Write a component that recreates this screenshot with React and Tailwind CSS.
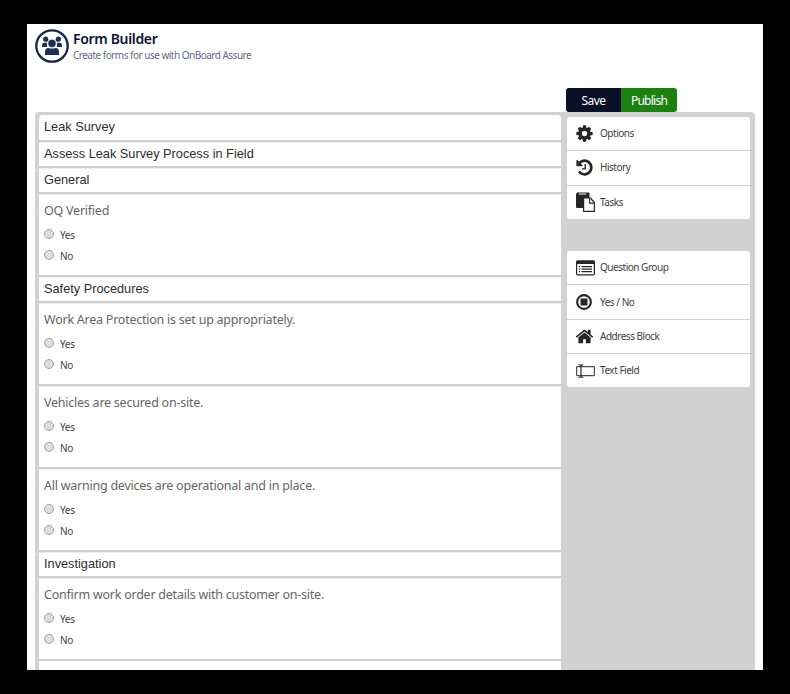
import React from "react";

const INK = "#262626";

const Fa = ({ d }) => (
  <svg viewBox="0 0 1792 1792" className="size-[19px] -ml-px shrink-0" fill={INK}>
    <path d={d} />
  </svg>
);

const COG =
  "M1152 896q0-106-75-181t-181-75-181 75-75 181 75 181 181 75 181-75 75-181zm512-109v222q0 12-8 23t-20 13l-185 28q-19 54-39 91 35 50 107 138 10 12 10 25t-9 23q-27 37-99 108t-94 71q-12 0-26-9l-138-108q-44 23-91 38-16 136-29 186-7 28-36 28h-222q-14 0-24.5-8.5t-11.5-21.5l-28-184q-49-16-90-37l-141 107q-10 9-25 9-14 0-25-11-126-114-165-168-7-10-7-23 0-12 8-23 15-21 51-66.5t54-70.5q-27-50-41-99l-183-27q-13-2-21-12.5t-8-23.5v-222q0-12 8-23t19-13l186-28q14-46 39-92-40-57-107-138-10-12-10-24 0-10 9-23 26-36 98.5-107.5t94.5-71.5q13 0 26 10l138 107q44-23 91-38 16-136 29-186 7-28 36-28h222q14 0 24.5 8.5t11.5 21.5l28 184q49 16 90 37l142-107q9-9 24-9 13 0 25 10 129 119 165 170 7 8 7 22 0 12-8 23-15 21-51 66.5t-54 70.5q26 50 41 98l183 28q13 2 21 12.5t8 23.5z";
const HISTORY =
  "M1664 896q0 156-61 298t-164 245-245 164-298 61q-172 0-327-72.5t-264-204.5q-7-10-6.5-22.5t8.5-20.5l137-138q10-9 25-9 16 2 23 12 73 95 179 147t225 52q104 0 198.5-40.5t163.5-109.5 109.5-163.5 40.5-198.5-40.5-198.5-109.5-163.5-163.5-109.5-198.5-40.5q-98 0-188 35.5t-160 101.5l137 138q31 30 14 69-17 40-59 40h-448q-26 0-45-19t-19-45v-448q0-42 40-59 39-17 69 14l130 129q107-101 244.5-156.5t284.5-55.5q156 0 298 61t245 164 164 245 61 298zm-640-288v448q0 14-9 23t-23 9h-320q-14 0-23-9t-9-23v-64q0-14 9-23t23-9h224v-352q0-14 9-23t23-9h64q14 0 23 9t9 23z";
const HOME =
  "M1472 992v480q0 26-19 45t-45 19h-384v-384h-256v384h-384q-26 0-45-19t-19-45v-480q0-1 .5-3t.5-3l575-474 575 474q1 2 1 6zm223-69l-62 74q-8 9-21 11h-3q-13 0-21-7l-692-577-692 577q-12 8-24 7-13-2-21-11l-62-74q-8-10-7-23.5t11-21.5l719-599q32-26 76-26t76 26l244 204v-195q0-14 9-23t23-9h192q14 0 23 9t9 23v408l219 182q10 8 11 21.5t-7 23.5z";

const Paste = () => (
  <svg viewBox="0 0 19 20" className="h-5 w-[19px] shrink-0">
    <path d="M1 .6h11.5q1 0 1 1V6H1zM0 1.6h12V16H1q-1 0-1-1z" fill={INK} />
    <path d="M3 1.6h7.2v1H3z" fill="#fff" />
    <path d="M7.6 6h6.8l4 4.6v8.8H7.6z" fill="#fff" stroke={INK} strokeWidth="1.2" strokeLinejoin="round" />
    <path d="M13.6 6v5.1h4.8" fill="none" stroke={INK} strokeWidth="1.1" />
  </svg>
);

const ListAlt = () => (
  <svg viewBox="0 0 19 16" className="h-4 w-[19px] shrink-0" fill={INK}>
    <rect x=".6" y="1.1" width="17.8" height="13.8" rx="1.2" fill="#fff" stroke={INK} strokeWidth="1.2" />
    <path d="M.2 1.7Q.2.5 1.4.5h16.2q1.2 0 1.2 1.2V4H.2z" />
    <path d="M3 6h1.2v1.2H3zM3 8.5h1.2v1.2H3zM3 11h1.2v1.2H3zM5.5 6H16v1.2H5.5zM5.5 8.5H16v1.2H5.5zM5.5 11H16v1.2H5.5z" />
  </svg>
);

const StopCircle = () => (
  <svg viewBox="0 0 16 16" className="size-4 shrink-0">
    <circle cx="8" cy="8" r="6.9" fill="#fff" stroke={INK} strokeWidth="2.1" />
    <rect x="4.5" y="4.5" width="7" height="7" rx=".4" fill={INK} />
  </svg>
);

const TextField = () => (
  <svg viewBox="0 0 19 14" className="h-3.5 w-[19px] shrink-0" fill="none" stroke="#4c4c4c" strokeWidth="1.2">
    <rect x=".6" y="2.6" width="17.8" height="9" rx=".5" />
    <path d="M2.5 .8Q5 .5 5 2.2V12Q5 13.4 2.5 13.3M7.2 .8Q5 .5 5 2.2M5 12Q5 13.4 7.2 13.3" stroke="#262626" />
  </svg>
);

const Logo = () => (
  <svg viewBox="0 0 34 34" className="size-[34px] shrink-0" fill="#1d2f52">
    <circle cx="17" cy="17" r="15.7" fill="#fff" stroke="#14264a" strokeWidth="2.3" />
    <circle cx="10.7" cy="10.2" r="2.6" />
    <circle cx="23.3" cy="10.2" r="2.6" />
    <path d="M7 18v-2q0-2.3 2.5-2.3h2.6v4.3zM27 18v-2q0-2.3-2.5-2.3h-2.6v4.3z" />
    <circle cx="17" cy="14.4" r="4.1" stroke="#fff" strokeWidth=".7" />
    <path d="M10 26v-3.2q0-3.9 3.4-3.9 3.6 1.2 7.2 0 3.4 0 3.4 3.9V26z" />
  </svg>
);

const Heading = ({ h = "h-[26px]", first, children }) => (
  <div
    className={`${h} ${first ? "rounded-t-[4px] pt-px" : "border-t border-t-[#eeeeee]"} shrink-0 border-b-2 border-b-[#cecece] bg-white pl-[5px] font-['Liberation_Sans',sans-serif] text-[12.75px] leading-[21px] text-[#2d2d2d]`}
  >
    {children}
  </div>
);

const Radio = ({ label }) => (
  <label className="flex h-[21px] items-start">
    <span className="size-[10px] rounded-full border border-[#a3a3a3] bg-[#dedede]" />
    <span className="ml-1.5 mt-[-3px] text-[10px] leading-[18px] tracking-[-0.3px] text-[#3f3f3f]">{label}</span>
  </label>
);

const Question = ({ h = "h-[83px]", children }) => (
  <div className={`${h} shrink-0 border-b-2 border-t border-b-[#cecece] border-t-[#eeeeee] bg-white pl-[5px]`}>
    <div className="mt-[6px] h-[28px] whitespace-nowrap text-[12.5px] leading-[20px] tracking-[-0.24px] text-[#666]">{children}</div>
    <Radio label="Yes" />
    <Radio label="No" />
  </div>
);

const Tool = ({ icon, last, children }) => (
  <div className={`flex items-center pl-[9px] ${last ? "h-[33px]" : "h-[34.3px] border-b border-[#cfcfcf]"}`}>
    <div className="flex w-[24px] items-center">{icon}</div>
    <span className="whitespace-nowrap text-[10px] tracking-[-0.48px] text-[#404040]">{children}</span>
  </div>
);

export default function App() {
  return (
    <div className="h-[694px] w-[790px] bg-black pl-[27px] pt-6 font-['Noto_Sans',sans-serif]">
      <div className="flex h-[646px] w-[736px] flex-col overflow-hidden bg-white px-2">
        <header className="flex h-16 shrink-0 pt-[5px]">
          <Logo />
          <div className="ml-1 whitespace-nowrap">
            <h1 className="text-[14px] font-semibold leading-[20px] tracking-[-0.33px] text-[#0b1030]">Form Builder</h1>
            <p className="text-[10px] leading-[12px] tracking-[-0.51px] text-[#666b7a]">Create forms for use with OnBoard Assure</p>
          </div>
        </header>
        <div className="ml-[531px] flex h-6 w-[111px] shrink-0 overflow-hidden rounded-[3px] text-[12px] leading-[25px] tracking-[-0.75px] text-white">
          <button className="w-[55px] bg-[#080f27] tracking-[-0.6px]">Save</button>
          <button className="w-14 bg-[#1d8112]">Publish</button>
        </div>
        <main className="flex min-h-0 flex-1 overflow-hidden rounded-t-[4px] bg-[#d2d2d2] pl-1">
          <section className="mt-[3px] flex w-[522px] flex-col">
            <Heading first h="h-[27px]">Leak Survey</Heading>
            <Heading>Assess Leak Survey Process in Field</Heading>
            <Heading>General</Heading>
            <Question>OQ Verified</Question>
            <Heading>Safety Procedures</Heading>
            <Question>Work Area Protection is set up appropriately.</Question>
            <Question>Vehicles are secured on-site.</Question>
            <Question>All warning devices are operational and in place.</Question>
            <Heading>Investigation</Heading>
            <Question>Confirm work order details with customer on-site.</Question>
            <div className="h-5 shrink-0 bg-white" />
          </section>
          <aside className="ml-1.5 mt-[5px] w-[183px]">
            <div className="rounded-[3px] bg-white">
              <Tool icon={<Fa d={COG} />}>Options</Tool>
              <Tool icon={<Fa d={HISTORY} />}>History</Tool>
              <Tool last icon={<Paste />}>Tasks</Tool>
            </div>
            <div className="mt-[32.6px] rounded-[3px] bg-white">
              <Tool icon={<ListAlt />}>Question Group</Tool>
              <Tool icon={<StopCircle />}>Yes / No</Tool>
              <Tool icon={<Fa d={HOME} />}>Address Block</Tool>
              <Tool last icon={<TextField />}>Text Field</Tool>
            </div>
          </aside>
        </main>
      </div>
    </div>
  );
}
